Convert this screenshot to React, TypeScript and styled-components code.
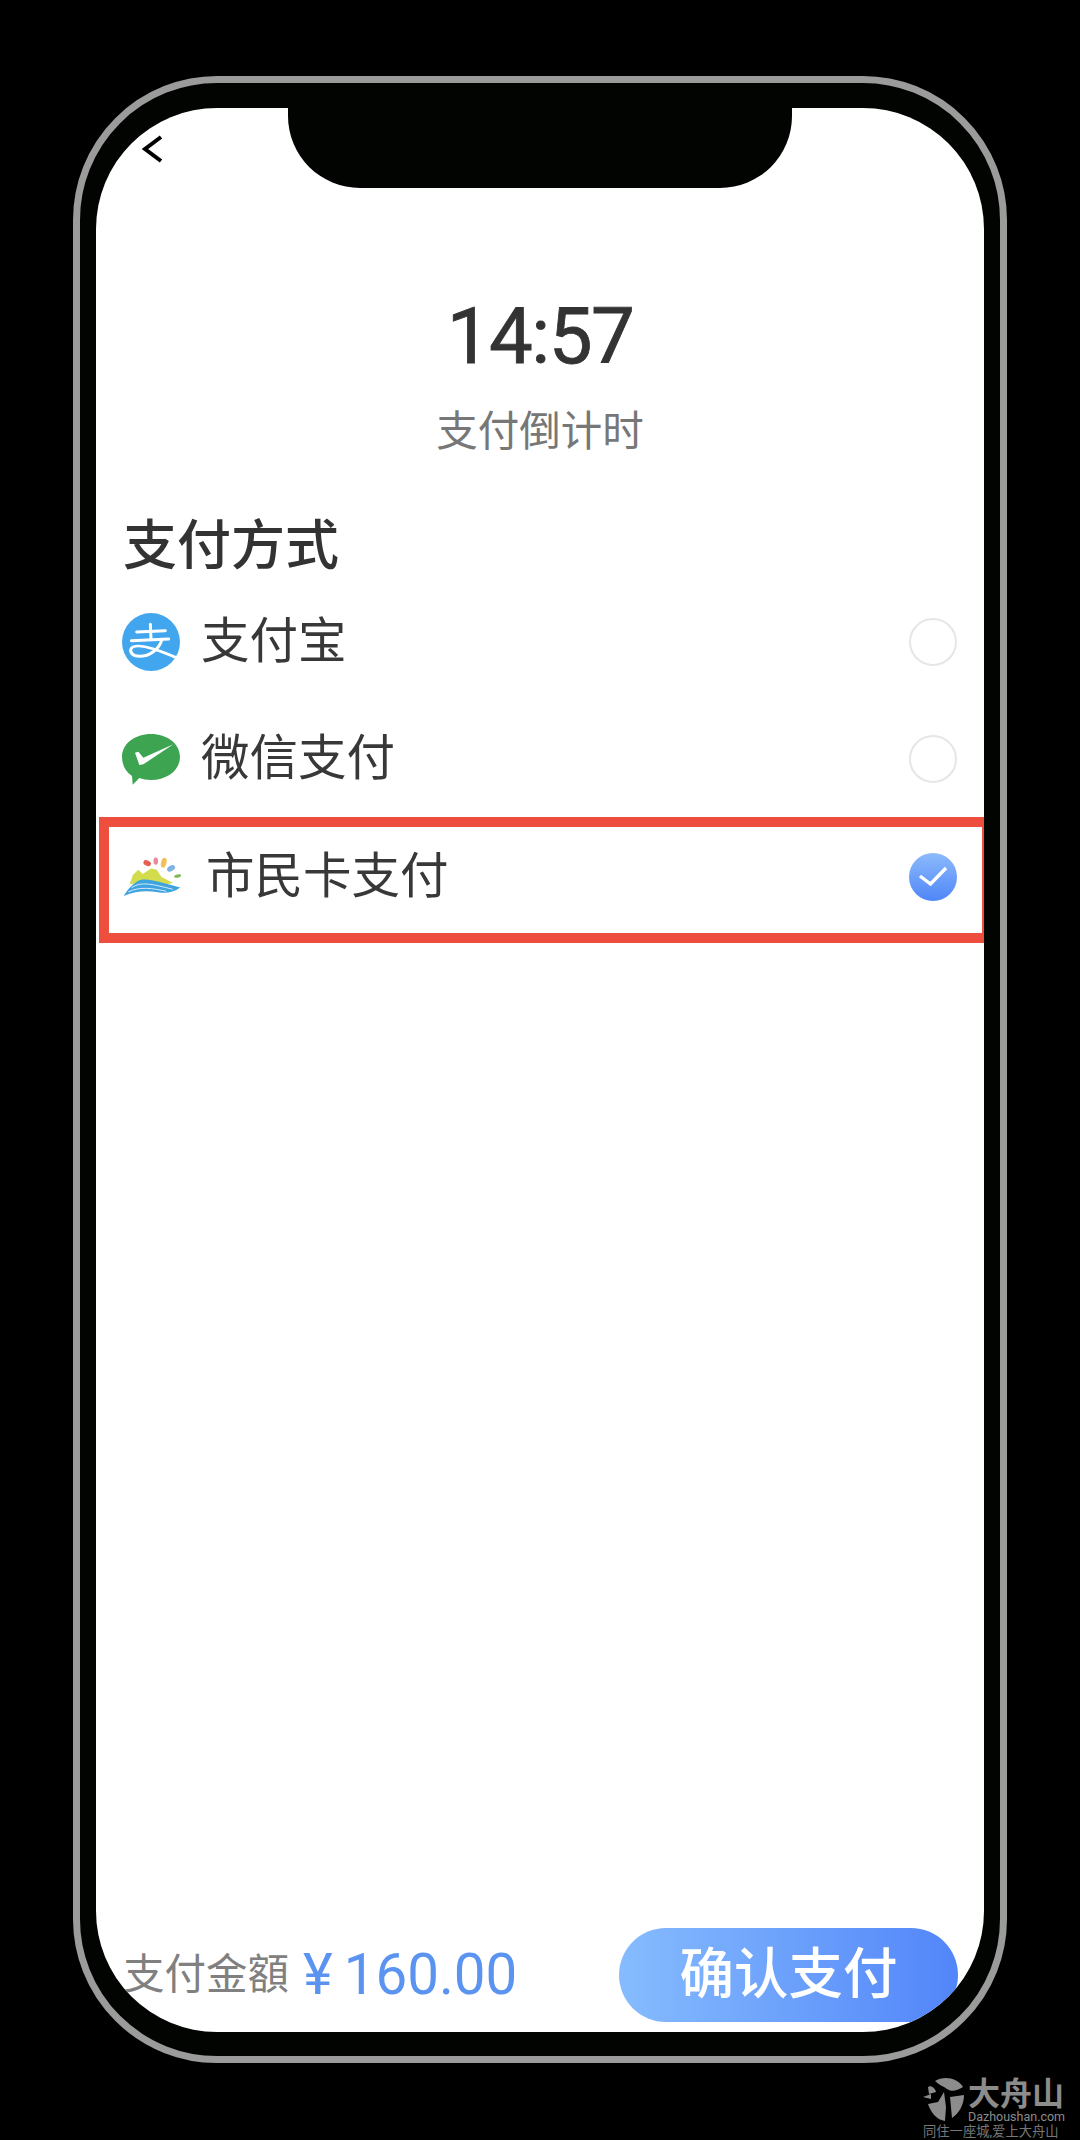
import React from 'react';
import styled, { createGlobalStyle } from 'styled-components';

const FONT = `Roboto, "Noto Sans CJK SC", sans-serif`;

const GlobalStyle = createGlobalStyle`
  html, body {
    margin: 0;
    padding: 0;
    background: #000;
    overflow: hidden;
  }
  * {
    box-sizing: border-box;
  }
`;

function AlipayIcon() {
  return (
    <IconSvg $height={58} viewBox="0 0 174 174">
      <circle cx="87" cy="87" r="87" fill="#41a6ee" />
      <g fill="none" stroke="#fff" strokeWidth="9" strokeLinecap="round" strokeLinejoin="round">
        <path d="M44 57 L130 53" />
        <path d="M85 34 L87 77" />
        <path d="M28 83 L140 78" />
        <path d="M120 79 C112 108 84 130 52 130 C30 130 22 116 28 106 C38 92 80 98 168 136" />
      </g>
    </IconSvg>
  );
}

function WechatIcon() {
  return (
    <IconSvg $height={52} viewBox="0 0 174 156">
      <path
        d="M87 3 C135 3 174 32 174 72 C174 112 135 141 87 141 C74 141 62 139 52 135 L32 155 L30 129 C11 116 0 96 0 72 C0 32 39 3 87 3 Z"
        fill="#3da552"
      />
      <path d="M39 59 L49 56 L64 74 L154 34 L64 94 L52 96 Z" fill="#fff" />
    </IconSvg>
  );
}

function CitizenCardIcon() {
  return (
    <IconSvg $height={40} viewBox="40 48 175 120">
      <ellipse cx="113" cy="66" rx="12" ry="8" fill="#e5604f" transform="rotate(25 113 66)" />
      <ellipse cx="139" cy="60" rx="7" ry="11" fill="#e88a9a" />
      <ellipse cx="163" cy="65" rx="8" ry="15" fill="#f3bf57" transform="rotate(15 163 65)" />
      <ellipse cx="185" cy="82" rx="13" ry="8" fill="#7fb3e3" transform="rotate(-30 185 82)" />
      <ellipse cx="205" cy="105" rx="11" ry="5" fill="#7dbb52" transform="rotate(-12 205 105)" />
      <path
        d="M60 130 L70 102 L86 86 L100 99 L124 82 L142 86 L156 108 L192 126 L150 134 L100 124 Z"
        fill="#d2dc4c"
      />
      <path d="M42 165 C52 150 62 134 85 120 C110 108 150 124 213 140 C190 156 170 158 145 154 C110 148 80 150 42 165 Z" fill="#3fa3e0" />
      <path d="M66 140 C95 120 130 130 190 145" fill="none" stroke="#d3ecfa" strokeWidth="3" />
      <path d="M56 153 C90 136 130 142 170 151" fill="none" stroke="#d3ecfa" strokeWidth="3" />
    </IconSvg>
  );
}

function Radio({ checked }: { checked?: boolean }) {
  return (
    <RadioMark $checked={checked}>
      {checked && (
        <svg width="48" height="48" viewBox="0 0 48 48">
          <path d="M11 23 L21.5 31 L37 15" fill="none" stroke="#fff" strokeWidth="3.4" />
        </svg>
      )}
    </RadioMark>
  );
}

function Watermark() {
  return (
    <WatermarkBox>
      <WatermarkTop>
        <svg width="42" height="44" viewBox="0 0 42 44">
          <path d="M12 4 C20 -1 34 0 40 10 C34 14 28 15 24 12 C20 9 16 8 12 4 Z" fill="#8c8c8c" />
          <path d="M0 20 L8 17 L8 22 Z" fill="#8c8c8c" />
          <path d="M5 10 C8 8 12 11 13 15 L6 17 Z" fill="#8c8c8c" />
          <path d="M5 27 L15 25 L21 15 L23 30 L22 44 C14 43 8 36 5 27 Z" fill="#8c8c8c" />
          <path d="M27 20 L41 18 C41 28 36 36 29 41 Z" fill="#8c8c8c" />
        </svg>
        <WatermarkText>
          <WatermarkName>大舟山</WatermarkName>
          <WatermarkSite>Dazhoushan.com</WatermarkSite>
        </WatermarkText>
      </WatermarkTop>
      <WatermarkSlogan>同住一座城,爱上大舟山</WatermarkSlogan>
    </WatermarkBox>
  );
}

export default function App() {
  return (
    <>
      <GlobalStyle />
      <Page>
        <Frame>
          <Screen>
            <Notch />
            <BackIcon width="24" height="30" viewBox="0 0 24 30">
              <path d="M20 3 L4 15 L20 27" fill="none" stroke="#000" strokeWidth="4" />
            </BackIcon>
            <Countdown>14:57</Countdown>
            <CountdownLabel>支付倒计时</CountdownLabel>
            <SectionTitle>支付方式</SectionTitle>
            <MethodRow>
              <AlipayIcon />
              <MethodName>支付宝</MethodName>
              <Radio />
            </MethodRow>
            <MethodRow>
              <WechatIcon />
              <MethodName>微信支付</MethodName>
              <Radio />
            </MethodRow>
            <SelectedRow>
              <CitizenCardIcon />
              <MethodName>市民卡支付</MethodName>
              <Radio checked />
            </SelectedRow>
            <Footer>
              <AmountLabel>支付金額</AmountLabel>
              <AmountValue>
                <Currency>¥</Currency>160.00
              </AmountValue>
              <PayButton>确认支付</PayButton>
            </Footer>
          </Screen>
        </Frame>
        <Watermark />
      </Page>
    </>
  );
}

const Page = styled.div`
  position: relative;
  width: 1080px;
  height: 2140px;
  padding: 76px 73px 77px;
  background: #000;
  font-family: ${FONT};
`;
const Frame = styled.div`
  width: 934px;
  height: 1987px;
  padding: 25px 16px 24px;
  border: 7px solid #9b9b9b;
  border-radius: 144px;
  background: #020402;
`;
const Screen = styled.div`
  position: relative;
  display: flex;
  flex-direction: column;
  height: 100%;
  overflow: hidden;
  border-radius: 121px;
  background: #fff;
`;
const Notch = styled.div`
  position: absolute;
  top: 0;
  left: 192px;
  width: 504px;
  height: 80px;
  border-radius: 0 0 72px 72px;
  background: #020402;
`;
const BackIcon = styled.svg`
  position: absolute;
  top: 26px;
  left: 45px;
`;
const Countdown = styled.div`
  margin-top: 183px;
  font-size: 78px;
  line-height: 92px;
  font-weight: 400;
  letter-spacing: -1.5px;
  text-align: center;
  color: #333;
  -webkit-text-stroke: 0.8px #333;
`;
const CountdownLabel = styled.div`
  margin-top: 19px;
  font-size: 41.5px;
  line-height: 60px;
  text-align: center;
  color: #777;
`;
const SectionTitle = styled.div`
  margin: 48px 0 0 27px;
  font-size: 54px;
  line-height: 73px;
  font-weight: 500;
  color: #333;
`;
const MethodRow = styled.div`
  display: flex;
  align-items: center;
  gap: 21px;
  height: 117px;
  padding: 0 27px 0 26px;
`;
const SelectedRow = styled(MethodRow)`
  gap: 25px;
  height: 126px;
  margin-left: 3px;
  padding: 0 25px 6px 14px;
  border: 10px solid #ee4e3e;
  border-right-width: 2px;
`;
const IconSvg = styled.svg<{ $height: number }>`
  flex: none;
  width: 58px;
  height: ${({ $height }) => $height}px;
`;
const MethodName = styled.div`
  flex: 1;
  font-size: 48.5px;
  line-height: 60px;
  color: #383838;
`;
const RadioMark = styled.div<{ $checked?: boolean }>`
  flex: none;
  width: 48px;
  height: 48px;
  border-radius: 50%;
  border: ${({ $checked }) => ($checked ? 'none' : '2px solid #e6e6e6')};
  background: ${({ $checked }) =>
    $checked ? 'linear-gradient(180deg, #8cbafc, #4f86f7)' : '#fff'};
`;
const Footer = styled.div`
  display: flex;
  align-items: center;
  margin-top: auto;
  margin-bottom: 10px;
  padding-left: 27px;
`;
const AmountLabel = styled.div`
  font-size: 41.5px;
  line-height: 60px;
  color: #808080;
`;
const AmountValue = styled.div`
  margin-left: 14px;
  font-size: 56.5px;
  line-height: 60px;
  color: #5b94f0;
`;
const Currency = styled.span`
  margin-right: 11px;
`;
const PayButton = styled.div`
  width: 339px;
  height: 94px;
  margin-left: auto;
  margin-right: 26px;
  border-radius: 47px;
  background: linear-gradient(90deg, #86bcfe, #5285f9);
  font-size: 54.5px;
  line-height: 92px;
  font-weight: 500;
  text-align: center;
  color: #fff;
`;
const WatermarkBox = styled.div`
  position: absolute;
  top: 2077px;
  left: 923px;
  color: #8c8c8c;
`;
const WatermarkTop = styled.div`
  display: flex;
  gap: 3px;
`;
const WatermarkText = styled.div`
  display: flex;
  flex-direction: column;
`;
const WatermarkName = styled.div`
  font-size: 32px;
  line-height: 35px;
  font-weight: 700;
`;
const WatermarkSite = styled.div`
  font-size: 12.5px;
  line-height: 10px;
`;
const WatermarkSlogan = styled.div`
  margin-top: 3px;
  font-size: 13.3px;
  line-height: 14px;
  white-space: nowrap;
  color: #777;
`;
